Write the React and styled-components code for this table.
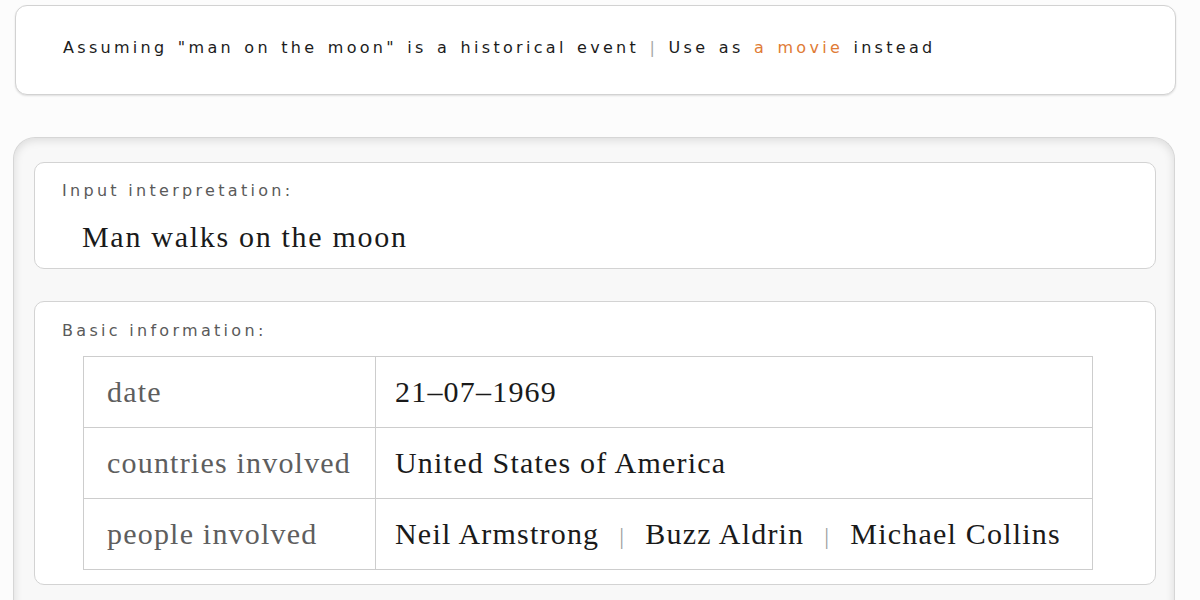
import React from "react";
import styled, { createGlobalStyle } from "styled-components";

const GlobalStyle = createGlobalStyle`
  body {
    margin: 0;
    background: #fcfcfc;
  }
`;

const rows = [
  { label: "date", value: ["21–07–1969"] },
  { label: "countries involved", value: ["United States of America"] },
  { label: "people involved", value: ["Neil Armstrong", "Buzz Aldrin", "Michael Collins"] },
];

export default function App() {
  return (
    <>
      <GlobalStyle />
      <Page>
        <Assumption>
          <span>Assuming "man on the moon" is a historical event </span>
          <Pipe>|</Pipe>
          <span>
            {" "}Use as <Link>a movie</Link> instead
          </span>
        </Assumption>

        <Results>
          <Pod>
            <PodTitle>Input interpretation:</PodTitle>
            <Interpretation>Man walks on the moon</Interpretation>
          </Pod>

          <Pod $gap>
            <PodTitle>Basic information:</PodTitle>
            <InfoTable>
              <tbody>
                {rows.map((row) => (
                  <tr key={row.label}>
                    <Key>{row.label}</Key>
                    <Value>
                      {row.value.map((v, i) => (
                        <React.Fragment key={v}>
                          {i > 0 && <ValueSep>|</ValueSep>}
                          {v}
                        </React.Fragment>
                      ))}
                    </Value>
                  </tr>
                ))}
              </tbody>
            </InfoTable>
          </Pod>
        </Results>
      </Page>
    </>
  );
}

const Page = styled.div`
  padding: 5px 0 0 13px;
  width: 1165px;
  height: 595px;
  overflow: hidden;
`;

const Assumption = styled.div`
  margin-left: 2px;
  width: 1161px;
  box-sizing: border-box;
  height: 90px;
  border: 1px solid #d2d2d2;
  border-radius: 12px;
  background: #fff;
  box-shadow: 0 1px 2px rgba(0, 0, 0, 0.12);
  display: flex;
  align-items: center;
  padding: 0 0 6px 47px;
  font-family: "DejaVu Sans", Verdana, sans-serif;
  font-size: 16px;
  letter-spacing: 3.3px;
  word-spacing: 2px;
  color: #1c1c1c;
  white-space: pre;
`;

const Pipe = styled.span`
  color: #a8a8a8;
`;

const Link = styled.span`
  color: #e07b35;
`;

const Results = styled.div`
  margin-top: 42px;
  width: 1162px;
  min-height: 500px;
  border: 1px solid #d6d6d6;
  border-bottom: none;
  border-radius: 22px 22px 0 0;
  background: #f8f8f8;
  box-shadow: inset 0 2px 10px rgba(0, 0, 0, 0.12);
  padding: 24px 18px 0 20px;
  box-sizing: border-box;
`;

const Pod = styled.div`
  margin-top: ${(p) => (p.$gap ? "32px" : "0")};
  border: 1px solid #d3d3d3;
  border-radius: 10px;
  background: #fff;
  padding: ${(p) => (p.$gap ? "20px 0 14px 27px" : "19px 0 13px 27px")};
`;

const PodTitle = styled.div`
  font-family: "DejaVu Sans", Verdana, sans-serif;
  font-size: 16px;
  letter-spacing: 3.3px;
  color: #5a5a5a;
  line-height: 18px;
`;

const Interpretation = styled.div`
  margin: 19px 0 0 20px;
  font-family: "Liberation Serif", "Times New Roman", serif;
  font-size: 30px;
  letter-spacing: 1.7px;
  color: #1a1a1a;
  line-height: 36px;
`;

const InfoTable = styled.table`
  margin: 16px 0 0 21px;
  width: 1010px;
  border-collapse: collapse;
  font-family: "Liberation Serif", "Times New Roman", serif;
  font-size: 30px;
  letter-spacing: 1.2px;
  td {
    border: 1px solid #cdcdcd;
    height: 70px;
    padding: 0;
  }
`;

const Key = styled.td`
  width: 268px;
  padding-left: 23px !important;
  color: #5e5e5e;
`;

const Value = styled.td`
  padding-left: 19px !important;
  color: #1a1a1a;
`;

const ValueSep = styled.span`
  color: #a0a0a0;
  font-size: 24px;
  margin: 0 20px;
`;
